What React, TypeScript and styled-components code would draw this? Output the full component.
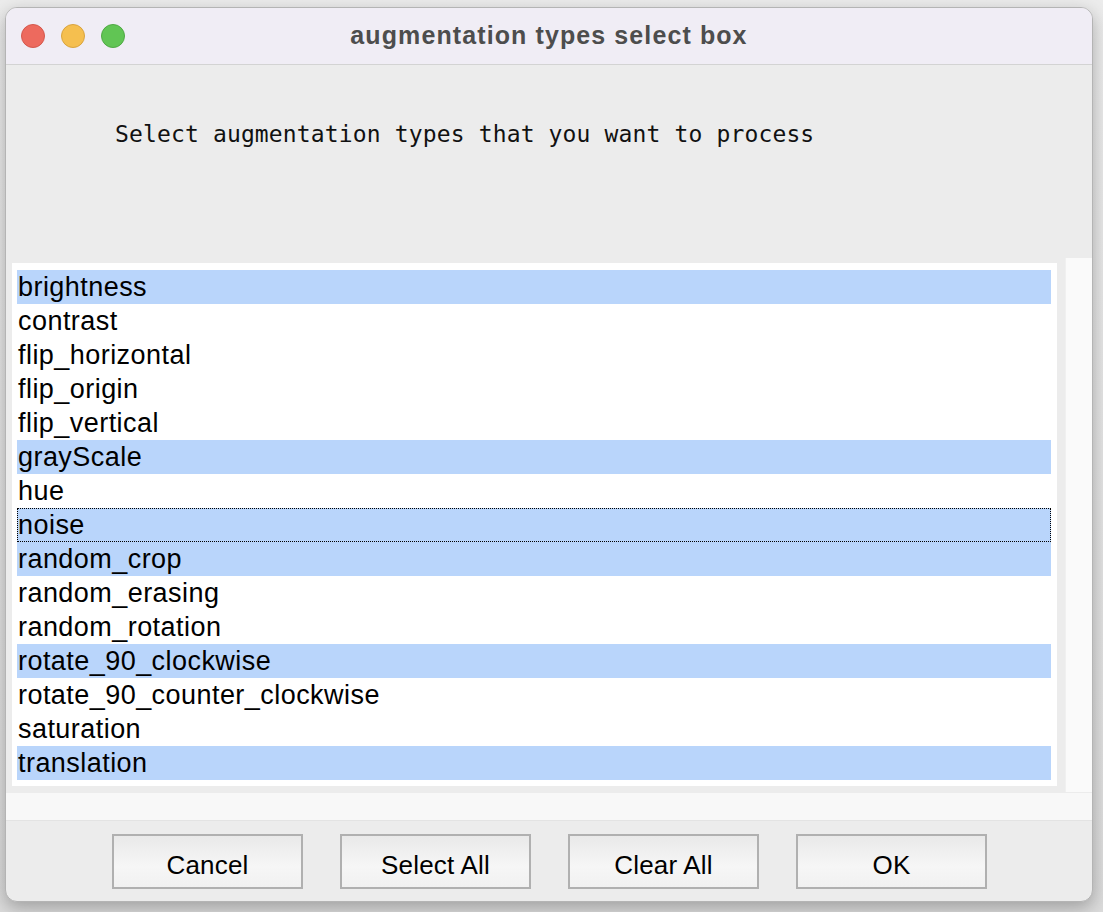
import React from 'react';
import styled, { createGlobalStyle } from 'styled-components';

const GlobalStyle = createGlobalStyle`
  html, body {
    margin: 0;
    padding: 0;
    background: #e4e4e4;
  }
`;

const Page = styled.div`
  width: 1103px;
  height: 912px;
  box-sizing: border-box;
  padding: 7px 10px 0 5px;
  background: linear-gradient(#ececec, #dcdcdc);
  overflow: hidden;
`;

const Window = styled.div`
  width: 1088px;
  height: 895px;
  box-sizing: border-box;
  border: 1px solid #b4b4b4;
  border-radius: 12px;
  overflow: hidden;
  display: flex;
  flex-direction: column;
  background: #ececec;
  box-shadow: 0 6px 18px rgba(0, 0, 0, 0.28);
`;

const TitleBar = styled.div`
  height: 56px;
  flex: none;
  display: grid;
  grid-template-columns: 1fr auto 1fr;
  align-items: center;
  padding-left: 15px;
  background: #f0edf5;
  border-bottom: 1px solid #d3d3d3;
`;

const Lights = styled.div`
  display: flex;
  gap: 16px;
`;

const Light = styled.span<{ $color: string; $edge: string }>`
  width: 24px;
  height: 24px;
  box-sizing: border-box;
  border-radius: 50%;
  background: ${(p) => p.$color};
  border: 1px solid ${(p) => p.$edge};
`;

const Title = styled.div`
  font-family: 'Liberation Sans', Arial, sans-serif;
  font-weight: bold;
  font-size: 25px;
  letter-spacing: 1.1px;
  color: #4d4d4d;
  margin: -2px 0 0 -15px;
`;

const Header = styled.div`
  height: 193px;
  flex: none;
  box-sizing: border-box;
  padding: 56px 0 0 109px;
  font-family: 'DejaVu Sans Mono', 'Liberation Mono', monospace;
  font-size: 23px;
  letter-spacing: 0.14px;
  line-height: 27px;
  color: #111;
  white-space: pre;
`;

const ListArea = styled.div`
  height: 535px;
  flex: none;
  display: flex;
  align-items: flex-start;
`;

const ListBox = styled.div`
  width: 1045px;
  height: 523px;
  box-sizing: border-box;
  margin: 5px 8px 0 6px;
  padding: 7px 6px 6px 5px;
  background: #fff;
`;

const Row = styled.div<{ $selected: boolean; $focused: boolean }>`
  height: 34px;
  line-height: 34px;
  padding-left: 1px;
  font-family: 'Liberation Sans', Arial, sans-serif;
  font-size: 27px;
  letter-spacing: 0.45px;
  color: #000;
  white-space: nowrap;
  background: ${(p) => (p.$selected ? '#b9d5fb' : 'transparent')};
  outline: ${(p) => (p.$focused ? '1px dotted #000' : 'none')};
  outline-offset: -1px;
`;

const Track = styled.div`
  width: 27px;
  height: 534px;
  box-sizing: border-box;
  background: #fafafa;
  border-left: 1px solid #f0f0f0;
`;

const HStrip = styled.div`
  height: 27px;
  flex: none;
  background: #f8f8f8;
  border-bottom: 1px solid #e3e3e3;
`;

const ButtonBar = styled.div`
  flex: 1;
  display: flex;
  align-items: flex-start;
  gap: 37px;
  padding: 13px 0 0 106px;
`;

const Button = styled.button`
  width: 191px;
  height: 55px;
  box-sizing: border-box;
  border: 2px solid #b0b0b0;
  border-radius: 0;
  background: linear-gradient(#e9e9e9, #f6f6f6 60%, #f1f1f1);
  font-family: 'Liberation Sans', Arial, sans-serif;
  font-size: 26px;
  letter-spacing: 0.2px;
  color: #000;
  padding: 7px 0 0;
`;

const items = [
  'brightness',
  'contrast',
  'flip_horizontal',
  'flip_origin',
  'flip_vertical',
  'grayScale',
  'hue',
  'noise',
  'random_crop',
  'random_erasing',
  'random_rotation',
  'rotate_90_clockwise',
  'rotate_90_counter_clockwise',
  'saturation',
  'translation',
];

const selected = new Set(['brightness', 'grayScale', 'noise', 'random_crop', 'rotate_90_clockwise', 'translation']);

export default function App() {
  return (
    <>
      <GlobalStyle />
      <Page>
        <Window>
          <TitleBar>
            <Lights>
              <Light $color="#ed6a5e" $edge="#d4584d" />
              <Light $color="#f5bf4f" $edge="#d9a43f" />
              <Light $color="#61c554" $edge="#4fa944" />
            </Lights>
            <Title>augmentation types select box</Title>
            <div />
          </TitleBar>
          <Header>Select augmentation types that you want to process</Header>
          <ListArea>
            <ListBox>
              {items.map((name) => (
                <Row key={name} $selected={selected.has(name)} $focused={name === 'noise'}>
                  {name}
                </Row>
              ))}
            </ListBox>
            <Track />
          </ListArea>
          <HStrip />
          <ButtonBar>
            <Button>Cancel</Button>
            <Button>Select All</Button>
            <Button>Clear All</Button>
            <Button>OK</Button>
          </ButtonBar>
        </Window>
      </Page>
    </>
  );
}
